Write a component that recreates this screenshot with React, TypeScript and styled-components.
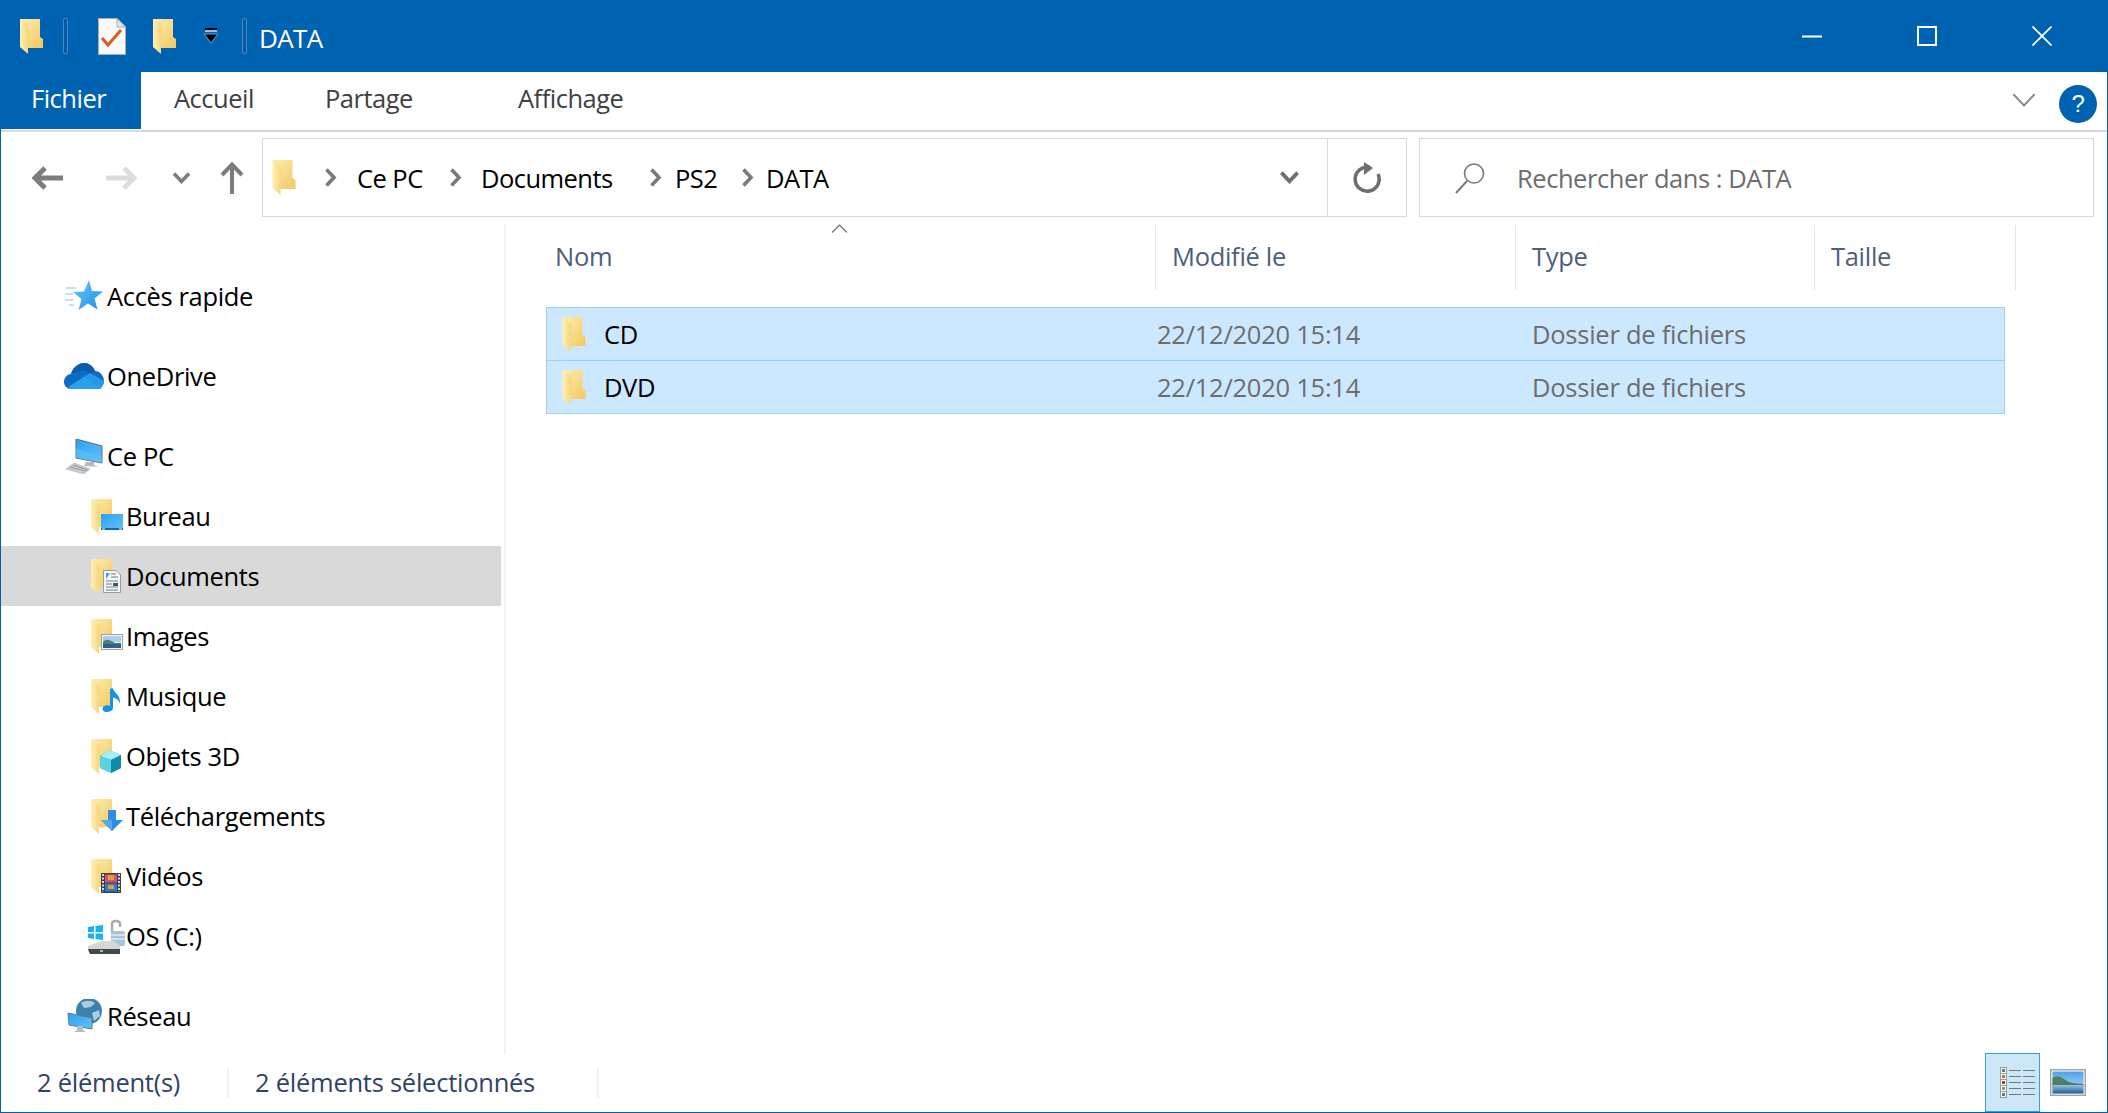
import React from 'react';
import styled, { createGlobalStyle } from 'styled-components';

const Global = createGlobalStyle`
  html, body { margin: 0; padding: 0; background: #fff; }
  body { font-family: "Open Sans", "Noto Sans", "Liberation Sans", sans-serif; }
  #root { height: 1113px; }
`;

const Win = styled.div`
  width: 2108px; height: 1113px; box-sizing: border-box;
  border: 1px solid #0063b1; border-top: 0;
  display: flex; flex-direction: column; background: #fff; overflow: hidden;
  font-size: 25.5px; letter-spacing: -0.2px;
`;
const TitleBar = styled.div`
  height: 72px; flex: none; margin: 0 -1px; background: #0063b1; color: #fff;
  display: flex; align-items: center; padding-left: 20px;
`;
const QuickSep = styled.div<{ $l: number; $r: number }>`
  width: 5px; height: 36px; box-sizing: border-box; flex: none;
  border: 1px solid #3f8ac8; border-radius: 2px; background: #0a5a9f;
  margin-left: ${p => p.$l}px; margin-right: ${p => p.$r}px;
`;
const Title = styled.span`
  flex: 1; font-size: 26px; letter-spacing: -0.6px; line-height: 72px; margin-top: 3px;
`;
const Controls = styled.div`display: flex; margin-right: 9px;`;
const CtrlBtn = styled.div`
  width: 115px; height: 72px; display: flex; align-items: center; justify-content: center;
`;

const Ribbon = styled.div`
  height: 60px; flex: none; box-sizing: border-box; border-bottom: 2px solid #dadada;
  display: flex; align-items: flex-start; padding-right: 9px;
`;
const Tab = styled.div<{ $w: number; $active?: boolean }>`
  width: ${p => p.$w}px; height: 57px; box-sizing: border-box; flex: none;
  padding-left: ${p => (p.$active ? 31 : 33)}px; line-height: 52px; letter-spacing: -0.5px;
  margin-left: ${p => (p.$active ? -1 : 0)}px;
  background: ${p => (p.$active ? '#0063b1' : 'transparent')};
  color: ${p => (p.$active ? '#fff' : '#3f3f3f')};
`;
const RibbonRight = styled.div`
  margin-left: auto; height: 57px; display: flex; align-items: center; gap: 21px; padding-right: 1px;
`;
const Help = styled.div`
  width: 38px; height: 38px; border-radius: 50%; background: #0063b1; color: #fff;
  display: flex; align-items: center; justify-content: center; font-size: 24px; margin-top: 7px;
  font-family: "Liberation Sans", sans-serif;
`;

const NavBar = styled.div`
  height: 92px; flex: none; display: flex; align-items: flex-start; padding-top: 6px; box-sizing: border-box;
`;
const NavBtns = styled.div`
  width: 261px; height: 79px; flex: none; display: flex; align-items: center; box-sizing: border-box; padding-left: 31px;
`;
const NavBtn = styled.div<{ $w: number }>`
  width: ${p => p.$w}px; flex: none; display: flex; align-items: center;
`;
const AddressBox = styled.div`
  width: 1145px; height: 79px; flex: none; box-sizing: border-box; border: 1.5px solid #d9d9d9;
  display: flex; align-items: center; color: #000;
`;
const Crumbs = styled.div`flex: 1; display: flex; align-items: center; padding-left: 9px;`;
const Crumb = styled.span<{ $w: number }>`
  width: ${p => p.$w}px; flex: none; display: flex; align-items: center; white-space: nowrap; letter-spacing: -0.55px;
`;
const ChevCell = styled.div`
  width: 50px; height: 100%; display: flex; align-items: center; justify-content: center;
`;
const RefreshCell = styled.div`
  width: 79px; height: 100%; box-sizing: border-box; border-left: 1.5px solid #d9d9d9;
  display: flex; align-items: center; justify-content: center;
`;
const SearchBox = styled.div`
  width: 675px; height: 79px; flex: none; margin-left: 12px; box-sizing: border-box; border: 1.5px solid #d9d9d9;
  display: flex; align-items: center; color: #6d6d6d; padding-left: 35px; letter-spacing: -0.45px;
`;
const SearchText = styled.span`margin-left: 32px;`;

const Main = styled.div`flex: 1; display: flex; min-height: 0;`;
const NavPane = styled.div`
  width: 500px; flex: none; padding-top: 42px; box-sizing: border-box; height: 830px;
`;
const NavRow = styled.div<{ $child?: boolean; $sel?: boolean; $gap?: boolean }>`
  height: 60px; display: flex; align-items: center; white-space: nowrap; box-sizing: border-box;
  padding-left: ${p => (p.$child ? 87 : 60)}px;
  margin-top: ${p => (p.$gap ? 20 : 0)}px;
  background: ${p => (p.$sel ? '#d9d9d9' : 'transparent')};
  color: #000; letter-spacing: -0.35px;
`;
const IconSlot = styled.div<{ $w: number }>`
  width: ${p => p.$w}px; flex: none; display: flex; align-items: center; justify-content: center;
`;
const PaneSplit = styled.div`
  width: 5px; flex: none; height: 830px; margin-top: 0; border-right: 2px solid #f3f3f3; box-sizing: border-box;
`;
const Files = styled.div`flex: 1; padding-left: 40px; min-width: 0;`;
const Header = styled.div`
  display: grid; grid-template-columns: 610px 360px 299px 201px; height: 65px; position: relative; margin-top: 1px;
`;
const HeadCell = styled.div<{ $first?: boolean }>`
  box-sizing: border-box; padding-left: ${p => (p.$first ? 9 : 16)}px;
  border-right: 1.5px solid #e5e5e5; color: #4c607a; line-height: 62px; letter-spacing: -0.3px;
`;
const SortCaret = styled.div`position: absolute; left: 291px; top: -1px; line-height: 0; margin-left: 0; transform: translateX(-6px) ;`;
const RowList = styled.div`width: 1459px; margin-top: 17px;`;
const FileRow = styled.div`
  display: grid; grid-template-columns: 610px 375px 1fr; height: 54px; box-sizing: border-box;
  background: #cce8ff; border: 1px solid #99d1ff; align-items: center; margin-top: -1px;
  &:first-child { margin-top: 0; }
`;
const NameCell = styled.div`display: flex; align-items: center; padding-left: 15px; color: #000; letter-spacing: -0.4px;`;
const NameText = styled.span`margin-left: 18px;`;
const MetaCell = styled.div`color: #6d6d6d; padding-left: 0; letter-spacing: -0.25px; white-space: nowrap;`;

const Status = styled.div`
  height: 59px; flex: none; display: flex; align-items: center; color: #2f4463; position: relative; letter-spacing: -0.25px;
`;
const StatusItem = styled.div<{ $w: number; $pad: number }>`
  width: ${p => p.$w}px; box-sizing: border-box; padding-left: ${p => p.$pad}px; flex: none; height: 30px;
  line-height: 28px; border-right: 2px solid #f0f0f0; white-space: nowrap;
`;
const ViewBtns = styled.div`
  margin-left: auto; display: flex; align-items: center; height: 100%; margin-right: 21px;
`;
const ViewBtn = styled.div`
  width: 55px; height: 59px; box-sizing: border-box; background: #cce8f8; border: 1.5px solid #3ba0d0;
  display: flex; align-items: center; justify-content: center; margin-right: 10px; padding-left: 10px;
`;
const Svg = styled.svg`display: block; flex: none;`;

const Defs = () => (
  <svg width="0" height="0" style={{ position: 'absolute' }}>
    <defs>
      <linearGradient id="fb" x1="0" y1="0" x2="1" y2="1"><stop offset="0" stopColor="#fdeeb2" /><stop offset="1" stopColor="#f2c85e" /></linearGradient>
      <linearGradient id="ff" x1="0" y1="0" x2="1" y2="0"><stop offset="0" stopColor="#fff0b5" /><stop offset="1" stopColor="#f6d479" /></linearGradient>
      <linearGradient id="sk" x1="0" y1="0" x2="0" y2="1"><stop offset="0" stopColor="#4d9fe8" /><stop offset="1" stopColor="#bfe2fb" /></linearGradient>
      <linearGradient id="st" x1="0" y1="0" x2="1" y2="1"><stop offset="0" stopColor="#6cc8fa" /><stop offset="1" stopColor="#1a8fdf" /></linearGradient>
      <linearGradient id="sc" x1="0" y1="0" x2="1" y2="1"><stop offset="0" stopColor="#2aa1f3" /><stop offset="1" stopColor="#62c0fa" /></linearGradient>
      <linearGradient id="wa" x1="0" y1="0" x2="0" y2="1"><stop offset="0" stopColor="#9cc4dc" /><stop offset="1" stopColor="#1f5e99" /></linearGradient>
    </defs>
  </svg>
);

const FolderG = ({ notch }: { notch?: boolean }) => (
  <g>
    <path d={notch ? 'M0 0H20V18L23 20V29H8L0 4Z' : 'M0 0H21V28H8L0 4Z'} fill="url(#fb)" />
    <path d="M0 0L9 7V28H8V35L0 28Z" fill="url(#ff)" />
  </g>
);
const Folder = ({ w = 23, h = 35 }: { w?: number; h?: number }) => (
  <Svg width={w} height={h} viewBox="0 0 23 35"><FolderG notch /></Svg>
);

const Doc = () => (
  <Svg width="28" height="37" viewBox="0 0 28 37">
    <path d="M.5.5H19L27.5 9V36.5H.5Z" fill="#f8f8f8" stroke="#a8adb5" />
    <path d="M19 .5V9H27.5Z" fill="#e3e5e8" stroke="#a8adb5" />
    <path d="M4 20L10 27L23 12" fill="none" stroke="#da5a22" strokeWidth="3" />
  </Svg>
);
const QuickArrow = () => (
  <Svg width="14" height="16" viewBox="0 0 14 16">
    <rect x="1" y="0" width="12" height="2" fill="#000" /><rect x="1" y="2" width="12" height="2" fill="#8fc0ea" />
    <path d="M0 6H14L7 15Z" fill="#000" stroke="#8fc0ea" strokeWidth=".8" />
  </Svg>
);
const Arrow = ({ c, dir = 'l' }: { c: string; dir?: 'l' | 'r' }) => (
  <Svg width="31" height="24" viewBox="0 0 31 24" style={{ transform: dir === 'r' ? 'scaleX(-1)' : undefined }}>
    <path d="M31 12H4M13 2L3 12L13 22" fill="none" stroke={c} strokeWidth="5" />
  </Svg>
);
const Chev = ({ w = 19, h = 12, c = '#7c7c7c', sw = 3.5 }: { w?: number; h?: number; c?: string; sw?: number }) => (
  <Svg width={w} height={h} viewBox="0 0 19 12"><path d="M2 1.5L9.5 9.5L17 1.5" fill="none" stroke={c} strokeWidth={sw} /></Svg>
);
const Up = () => (
  <Svg width="24" height="32" viewBox="0 0 24 32"><path d="M12 32V3M2 13L12 2.5L22 13" fill="none" stroke="#7c7c7c" strokeWidth="4" /></Svg>
);
const CrumbChev = () => (
  <Svg width="13" height="19" viewBox="0 0 13 19"><path d="M2.5 1.5L10 9.5L2.5 17.5" fill="none" stroke="#7a7a7a" strokeWidth="3.6" /></Svg>
);
const Refresh = () => (
  <Svg width="32" height="32" viewBox="0 0 32 32">
    <path d="M19 5.5A12 12 0 1 0 27 12" fill="none" stroke="#6f6f6f" strokeWidth="3.6" />
    <path d="M13 0V13L22 6Z" fill="#6f6f6f" />
  </Svg>
);
const Search = () => (
  <Svg width="30" height="32" viewBox="0 0 30 32">
    <circle cx="19" cy="11.5" r="9.5" fill="none" stroke="#7a7a7a" strokeWidth="1.6" />
    <path d="M12 19L1 31" stroke="#7a7a7a" strokeWidth="2" />
  </Svg>
);
const Star = () => (
  <Svg width="38" height="32" viewBox="0 0 38 32">
    <path d="M1 8H11M0 14H8M0 20H8M4 25H9" stroke="#a7dcf8" strokeWidth="1.3" />
    <path d="M24 0L27 11L38 11.5L29.5 18.5L32.5 29.5L23 23.5L13.5 30L16.5 19L8 12L19 11.5Z" fill="url(#st)" />
  </Svg>
);
const Cloud = () => (
  <Svg width="40" height="27" viewBox="0 0 40 27">
    <path d="M8 26C2 26 0 22 0 19C0 14 4 11 7 11C9 4 15 0 20 0C25 0 29 3 31 8C36 8 40 13 40 18C40 23 36 26 32 26Z" fill="#0a6cc4" />
    <path d="M7 11C9 4 15 0 20 0C25 0 29 3 31 8L26 10L20 7Z" fill="#0a5cab" />
    <path d="M3 26L20 14L38 26Z" fill="#33a4ee" />
    <path d="M8 26H33C37 26 40 23 40 18L26 10L4 24Z" fill="#28a0ea" opacity=".85" />
  </Svg>
);
const Pc = () => (
  <Svg width="37" height="35" viewBox="0 0 37 35">
    <path d="M10 0L36 7V24L10 19Z" fill="url(#sc)" stroke="#5a6a78" strokeWidth="1" />
    <path d="M10 19L36 24V18L10 9Z" fill="#60c0f5" opacity=".6" />
    <path d="M20 23H28V26L32 28L18 27Z" fill="#b5bcc2" />
    <path d="M8 24L24 30L18 35L0 30Z" fill="#c9cdd1" stroke="#a7acb0" strokeWidth=".6" />
    <path d="M4 28L20 32M7 26L22 31" stroke="#90969b" strokeWidth="1" />
  </Svg>
);
const Net = () => (
  <Svg width="35" height="35" viewBox="0 0 35 35">
    <circle cx="22" cy="12" r="13" fill="#3d7fae" />
    <path d="M14 4C18 1 24 1 28 4L24 8L17 9ZM25 14L32 11L33 17L27 22Z" fill="#a9cce0" />
    <path d="M1 14L25 19V30L2 26Z" fill="url(#sc)" stroke="#5a7c96" />
    <path d="M10 27H16V31L19 33H7L10 31Z" fill="#b5bcc2" />
  </Svg>
);
const Os = () => (
  <Svg width="38" height="37" viewBox="0 0 38 37">
    <path d="M0 9L6 8V14H0ZM7.5 8L15 7V14H7.5ZM0 15.5H6V21L0 20ZM7.5 15.5H15V22L7.5 21Z" fill="#16b3ee" />
    <path d="M24 14V6C24 2 32 2 32 6V9" fill="none" stroke="#a3adb5" strokeWidth="2.4" />
    <rect x="23" y="13" width="14" height="15" rx="2" fill="#a9c3d6" />
    <path d="M23 17H37M23 21H37" stroke="#dfeaf1" strokeWidth="1.4" />
    <path d="M0 28L14 23H26L32 28V36H2L0 33Z" fill="#d4d6d8" />
    <path d="M0 31H32V36H2Z" fill="#44484d" />
    <rect x="12" y="32" width="3" height="2" fill="#6fe06f" />
  </Svg>
);
type Kind = 'desk' | 'doc' | 'img' | 'music' | 'cube' | 'down' | 'film';
const Overlay = ({ kind }: { kind: Kind }) => {
  switch (kind) {
    case 'desk': return <g><rect x="10" y="15" width="22" height="16" fill="#fff" opacity=".4" /><rect x="10" y="15" width="22" height="16" fill="url(#sc)" /><path d="M10 29H32V31H10Z" fill="#0c6bb3" /><path d="M11 30H14M28 30H31" stroke="#fff" /></g>;
    case 'doc': return <g><path d="M12.5 11.5H25L29.5 16V33.5H12.5Z" fill="#f5f7f8" stroke="#8f9ca5" /><path d="M15 14L19 14L15 20Z" fill="#3aa0d8" /><path d="M20 15H25M20 18H27M15 22H27M15 25H21M15 28H27M15 31H27" stroke="#6e7f8e" strokeWidth="1.1" /><rect x="22" y="24" width="5" height="3" fill="#445766" /></g>;
    case 'img': return <g><rect x="10.5" y="15.5" width="21" height="15" fill="#f4f4f4" stroke="#9fa4a9" /><rect x="12" y="17" width="18" height="6" fill="#a9d0f2" /><path d="M12 23C15 19 19 21 24 24L30 24V25H12Z" fill="#4f7f6e" /><rect x="12" y="25" width="18" height="4" fill="#2f5f8f" /></g>;
    case 'music': return <g><path d="M19 10L21.5 9C23 14 30 16 29 25C28 21 25 19 22 18.5V29C22 32 18 33 15 33C12 33 11 30 12 28C14 26 17 26 19 27Z" fill="#1793e5" /></g>;
    case 'cube': return <g><path d="M18 11L30 16V29L20 34L9 29V17Z" fill="#24a9c8" /><path d="M9 17L18 11L30 16L20 21Z" fill="#a8eef5" /><path d="M9 17L20 21V34L9 29Z" fill="#5bd2e4" /><path d="M20 21L30 16V29L20 34Z" fill="#128aa8" /></g>;
    case 'down': return <g><path d="M17 11H25V21H32L21 32L10 21H17Z" fill="#2f8ee0" /><path d="M10 21L21 32V21Z" fill="#57a9ea" /></g>;
    default: return <g><rect x="10" y="14" width="20" height="20" fill="#3c3f44" /><rect x="14" y="15.5" width="12" height="8" fill="#d84d7a" /><rect x="14" y="24.5" width="12" height="8" fill="#2d79d6" /><path d="M17 16H23V21H17ZM17 26H23V30H17Z" fill="#d9a321" /><path d="M12 15V33M28 15V33" stroke="#d5d5d5" strokeWidth="2" strokeDasharray="2 1.5" /></g>;
  }
};
const NavFolder = ({ kind }: { kind: Kind }) => (
  <Svg width="33" height="35" viewBox="0 0 33 35"><FolderG /><Overlay kind={kind} /></Svg>
);
const DetailsIcon = () => (
  <Svg width="35" height="32" viewBox="0 0 35 32">
    {[0, 6, 12, 18, 24].map((y, i) => (
      <g key={y}>
        <rect x=".5" y={y + .5} width="6" height="6" fill="#fff" stroke="#9a9a9a" />
        <rect x="2" y={y + 2} width="3" height="3" fill={['#4f7f9f', '#9f7f4f', '#b03a2a', '#8f9f4f', '#4f7f9f'][i]} />
        <path d={`M9 ${y + 3.5}H21M23 ${y + 3.5}H35`} stroke="#6f7a85" strokeWidth="1.2" />
      </g>
    ))}
  </Svg>
);
const LargeIcon = () => (
  <Svg width="36" height="27" viewBox="0 0 36 27">
    <rect x=".75" y=".75" width="34.5" height="25.5" fill="#fff" stroke="#a5a5a5" strokeWidth="1.5" />
    <rect x="2.5" y="2.5" width="31" height="22" fill="url(#sk)" />
    <path d="M2.5 9C7 6 12 8 17 12C22 15 28 14 33.5 15V18H2.5Z" fill="#4f7f63" />
    <rect x="2.5" y="16" width="31" height="8.5" fill="url(#wa)" />
  </Svg>
);

const Row = ({ name }: { name: string }) => (
  <FileRow>
    <NameCell><Folder w={24} h={35} /><NameText>{name}</NameText></NameCell>
    <MetaCell>22/12/2020 15:14</MetaCell>
    <MetaCell>Dossier de fichiers</MetaCell>
  </FileRow>
);
const Child = ({ kind, label, sel }: { kind: Kind; label: string; sel?: boolean }) => (
  <NavRow $child $sel={sel}><IconSlot $w={38}><NavFolder kind={kind} /></IconSlot>{label}</NavRow>
);

export default function App() {
  return (
    <Win>
      <Global />
      <Defs />
      <TitleBar>
        <Folder />
        <QuickSep $l={20} $r={30} />
        <Doc />
        <IconSlot $w={27} />
        <Folder />
        <IconSlot $w={28} />
        <QuickArrow />
        <QuickSep $l={24} $r={12} />
        <Title>DATA</Title>
        <Controls>
          <CtrlBtn><Svg width="20" height="3" viewBox="0 0 20 3"><rect width="20" height="2" y=".5" fill="#fff" /></Svg></CtrlBtn>
          <CtrlBtn><Svg width="20" height="20" viewBox="0 0 20 20"><rect x="1" y="1" width="18" height="18" fill="none" stroke="#fff" strokeWidth="2" /></Svg></CtrlBtn>
          <CtrlBtn><Svg width="20" height="20" viewBox="0 0 20 20"><path d="M.5.5L19.5 19.5M19.5.5L.5 19.5" stroke="#fff" strokeWidth="1.8" /></Svg></CtrlBtn>
        </Controls>
      </TitleBar>
      <Ribbon>
        <Tab $w={141} $active>Fichier</Tab>
        <Tab $w={151}>Accueil</Tab>
        <Tab $w={193}>Partage</Tab>
        <Tab $w={200}>Affichage</Tab>
        <RibbonRight>
          <Chev w={28} h={17} c="#8a8a8a" sw={1.5} />
          <Help>?</Help>
        </RibbonRight>
      </Ribbon>
      <NavBar>
        <NavBtns>
          <NavBtn $w={74}><Arrow c="#7c7c7c" /></NavBtn>
          <NavBtn $w={66}><Arrow c="#dcdcdc" dir="r" /></NavBtn>
          <NavBtn $w={48}><Chev /></NavBtn>
          <NavBtn $w={30}><Up /></NavBtn>
        </NavBtns>
        <AddressBox>
          <Crumbs>
            <Folder w={24} h={35} />
            <Crumb $w={28} />
            <CrumbChev />
            <Crumb $w={20} />
            <Crumb $w={92}>Ce PC</Crumb>
            <CrumbChev />
            <Crumb $w={19} />
            <Crumb $w={168}>Documents</Crumb>
            <CrumbChev />
            <Crumb $w={13} />
            <Crumb $w={66}>PS2</Crumb>
            <CrumbChev />
            <Crumb $w={12} />
            <Crumb $w={80}>DATA</Crumb>
          </Crumbs>
          <ChevCell><Chev w={21} h={13} c="#6f6f6f" /></ChevCell>
          <IconSlot $w={13} />
          <RefreshCell><Refresh /></RefreshCell>
        </AddressBox>
        <SearchBox>
          <Search />
          <SearchText>Rechercher dans : DATA</SearchText>
        </SearchBox>
      </NavBar>
      <Main>
        <NavPane>
          <NavRow><IconSlot $w={46}><Star /></IconSlot>Accès rapide</NavRow>
          <NavRow $gap><IconSlot $w={46}><Cloud /></IconSlot>OneDrive</NavRow>
          <NavRow $gap><IconSlot $w={46}><Pc /></IconSlot>Ce PC</NavRow>
          <Child kind="desk" label="Bureau" />
          <Child kind="doc" label="Documents" sel />
          <Child kind="img" label="Images" />
          <Child kind="music" label="Musique" />
          <Child kind="cube" label="Objets 3D" />
          <Child kind="down" label="Téléchargements" />
          <Child kind="film" label="Vidéos" />
          <NavRow $child><IconSlot $w={38}><Os /></IconSlot>OS (C:)</NavRow>
          <NavRow $gap><IconSlot $w={46}><Net /></IconSlot>Réseau</NavRow>
        </NavPane>
        <PaneSplit />
        <Files>
          <Header>
            <HeadCell $first>Nom</HeadCell>
            <HeadCell>Modifié le</HeadCell>
            <HeadCell>Type</HeadCell>
            <HeadCell>Taille</HeadCell>
            <SortCaret>
              <Svg width="17" height="9" viewBox="0 0 17 9"><path d="M1 8.5L8.5 1L16 8.5" fill="none" stroke="#707070" strokeWidth="1.2" /></Svg>
            </SortCaret>
          </Header>
          <RowList>
            <Row name="CD" />
            <Row name="DVD" />
          </RowList>
        </Files>
      </Main>
      <Status>
        <StatusItem $w={228} $pad={36}>2 élément(s)</StatusItem>
        <StatusItem $w={370} $pad={26}>2 éléments sélectionnés</StatusItem>
        <ViewBtns>
          <ViewBtn><DetailsIcon /></ViewBtn>
          <LargeIcon />
        </ViewBtns>
      </Status>
    </Win>
  );
}
